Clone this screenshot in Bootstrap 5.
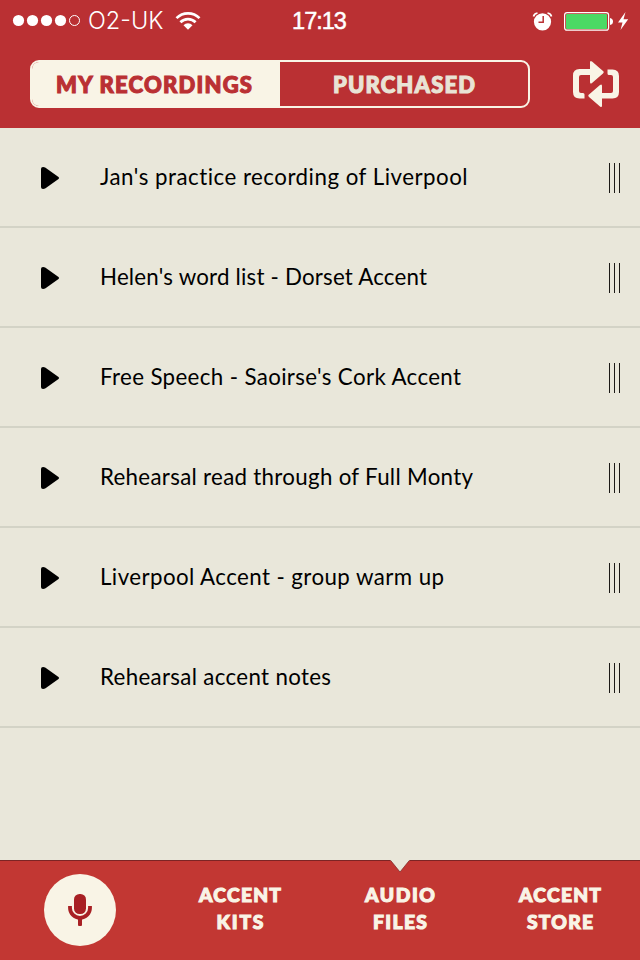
<!DOCTYPE html>
<html lang="en">
<head>
<meta charset="utf-8">
<meta name="viewport" content="width=device-width, initial-scale=1">
<title>My Recordings</title>
<link href="https://cdn.jsdelivr.net/npm/bootstrap@5.3.0/dist/css/bootstrap.min.css" rel="stylesheet">
<style>
  body { font-family: "Lato", sans-serif; background: #e9e7da; }
  .phone { width: 640px; height: 960px; background: #e9e7da; overflow: hidden; }
  .top { background: #ba3033; height: 128px; }
  .status { height: 40px; color: #fff; display: grid; grid-template-columns: 1fr auto 1fr; }
  .signal { overflow: visible; margin-bottom: 1px; }
  .carrier { font: 300 23.5px/40px "Inter", sans-serif; margin-left: 8px; padding-top: 1px; }
  .clock { font: 500 23.5px/40px "Liberation Sans", sans-serif; -webkit-text-stroke: .5px #fff; letter-spacing: -1px; margin-left: -2px; }
  .wifi { margin-left: 12px; }
  .toolbar { height: 88px; padding: 20px 20px 20px 30px; }
  .segments { width: 500px; height: 48px; border: 2px solid #f9f4e6; border-radius: 9px; overflow: hidden; }
  .segment { border: 0; padding: 0; width: 248px; background: transparent; color: #e9e3d5; font-weight: 900; font-size: 22px; line-height: 43px; -webkit-text-stroke: 1.1px; }
  .segment.current { background: #f9f4e6; color: #ba3033; padding-right: 4px; }
  .track { height: 100px; padding: 0 19px 0 40px; background: transparent; border: 0; border-radius: 0; color: #000; box-shadow: inset 0 -2px #d3d3c6; }
  .track-name { font-size: 22.3px; line-height: 30px; margin-left: 40px; margin-top: -2px; white-space: nowrap; }
  .grip { width: 12px; height: 30px; }
  .bottom { height: 100px; background: #c23733; border-top: 1px solid #7c2424; }
  .tab { width: 160px; color: #f9f4e6; font-weight: 900; font-size: 19.3px; line-height: 27px; text-align: center; text-decoration: none; -webkit-text-stroke: 1.1px; padding-bottom: 6px; }
  .tab:hover { color: #f9f4e6; }
  .notch { position: absolute; left: 70px; top: -1px; }
  .record { width: 72px; height: 72px; background: #f9f4e6; margin-top: 4px; }
</style>
</head>
<body class="m-0">
<div class="phone d-flex flex-column">
  <header class="top">
    <div class="status align-items-center">
      <div class="d-flex align-items-center">
        <svg class="signal ms-2 ps-1" width="72" height="14" viewBox="0 0 68 14"><g fill="#fff"><circle cx="6.5" cy="7.5" r="5.6"/><circle cx="20.5" cy="7.5" r="5.6"/><circle cx="34.5" cy="7.5" r="5.6"/><circle cx="48.5" cy="7.5" r="5.6"/></g><circle cx="62.5" cy="7.5" r="5" fill="none" stroke="#fff"/></svg>
        <span class="carrier">O2-UK</span>
        <svg class="wifi" width="26" height="20" viewBox="0 0 26 20"><g fill="none" stroke="#fff" stroke-width="2.7"><path d="M1.5 7.1a16.3 16.3 0 0 1 23 0"/><path d="M5.4 11.2a10.8 10.8 0 0 1 15.2 0"/></g><path d="M8.5 14.2a6.4 6.4 0 0 1 9 0L13 18.7z" fill="#fff"/></svg>
      </div>
      <span class="clock">17:13</span>
      <div class="d-flex align-items-center justify-content-end">
        <svg width="108" height="24" viewBox="532 8 108 24"><circle cx="542.5" cy="20.8" r="8.6" fill="#fff"/><path d="M543.2 15v6.3h-4.7" fill="none" stroke="#ba3033" stroke-width="1.5"/><path d="M533.5 15.5q.7-3 4-3.500M551.500 15.500q-.7-3-4-3.500" fill="none" stroke="#fff" stroke-width="1.7"/><rect x="564.6" y="11.6" width="44" height="17.6" rx="2.5" fill="none" stroke="#fff" stroke-width="1.2"/><rect x="566" y="13" width="41" height="15" rx="1" fill="#4cd964"/><path d="M610 17q3 .5 3 3.500t-3 3.500z" fill="#fff"/><path d="M625.500 11l-7.500 10.500h4.500l-2 7.500 7.700-10.700h-4.700z" fill="#fff"/></svg>
      </div>
    </div>
    <div class="toolbar d-flex justify-content-between align-items-center">
      <div class="segments d-flex" role="group">
        <button class="segment current"><span class="seg-a">MY RECORDINGS</span></button>
        <button class="segment"><span class="seg-b">PURCHASED</span></button>
      </div>
      <svg width="48" height="48" viewBox="572 60 48 48" fill="#f9f4e6"><path d="M584.5 98.500h-5q-6.500 0-6.500-6.500V75.500q0-6.500 6.500-6.500H590v-6.500q0-2.600 2-1l11 9.500q1.400 1.200 0 2.400l-11 9.600q-2 1.500-2-1V75h-9q-2 0-2 2v14q0 2 2 2h2q1.500 0 1.500 1.500z"/><path d="M607.500 69.500h5q6.500 0 6.500 6.500v16q0 6.500-6.500 6.500H602v7q0 2.600-2 1l-11-9.500q-1.400-1.200 0-2.400l11-9.600q2-1.500 2 1v7h9q2 0 2-2V77q0-2-2-2h-2q-1.500 0-1.500-1.500z"/></svg>
    </div>
  </header>

  <main class="list-group list-group-flush flex-grow-1" id="tracks"></main>

  <nav class="bottom d-flex align-items-center">
    <div class="tab d-flex justify-content-center">
      <button class="record btn rounded-circle border-0 p-0 d-flex"><svg width="72" height="72" viewBox="44 874 72 72"><rect x="74" y="894" width="12" height="20" rx="5.5" fill="#a82024"/><path d="M70 906v2a10 9.800 0 0 0 20 0v-2" fill="none" stroke="#a82024" stroke-width="3.800"/><path d="M78 918h4v7q0 1-1 1h-2q-1 0-1-1z" fill="#a82024"/></svg></button>
    </div>
    <a class="tab" href="#"><span class="t1">ACCENT</span><br><span class="t2">KITS</span></a>
    <a class="tab position-relative align-self-stretch d-flex align-items-center justify-content-center" href="#"><svg class="notch" width="20" height="14" viewBox="0 0 20 14"><path d="M0 0 .7.5 10 12 19.300.5 20 0z" fill="#e9e7da"/><path d="M.7.500 10 12 19.300.5" fill="none" stroke="#7c2424" stroke-width=".7"/></svg><span><span class="t3">AUDIO</span><br><span class="t4">FILES</span></span></a>
    <a class="tab" href="#"><span class="t1">ACCENT</span><br><span class="t5">STORE</span></a>
  </nav>
</div>
<script src="https://cdn.jsdelivr.net/npm/bootstrap@5.3.0/dist/js/bootstrap.bundle.min.js"></script>
<script>
  const tracks = [
    ["Jan's practice recording of Liverpool", 368],
    ["Helen's word list - Dorset Accent", 327],
    ["Free Speech - Saoirse's Cork Accent", 361],
    ["Rehearsal read through of Full Monty", 373],
    ["Liverpool Accent - group warm up", 344],
    ["Rehearsal accent notes", 231]
  ];
  const list = document.getElementById("tracks");
  for (const [name] of tracks) {
    list.insertAdjacentHTML("beforeend", `
      <div class="track list-group-item d-flex align-items-center">
        <svg width="20" height="24" viewBox="0 0 20 24"><path d="M1 3q0-2 2-2 1.500 0 2.500.7l13 9.300q1.300 1 0 2l-13 9.300q-1 .7-2.500.7-2 0-2-2z"/></svg>
        <span class="track-name">${name}</span>
        <svg class="grip ms-auto" viewBox="0 0 12 30"><path d="M.5 0v30M5.500 0v30M10.500 0v30" stroke="#1c1a16"/></svg>
      </div>`);
  }
  // Track the letters out so that each label fills its intended width.
  function fit(el, width) {
    const gap = (width - el.getBoundingClientRect().width) / (el.textContent.length - 1);
    el.style.letterSpacing = gap + "px";
    el.style.marginRight = -gap + "px";
  }
  document.querySelectorAll(".track-name").forEach((el, i) => fit(el, tracks[i][1]));
  const labels = { ".seg-a": 196, ".seg-b": 142, ".t1": 82, ".t2": 47, ".t3": 70, ".t4": 54, ".t5": 66 };
  for (const [sel, width] of Object.entries(labels))
    document.querySelectorAll(sel).forEach(el => fit(el, width));
</script>
</body>
</html>
